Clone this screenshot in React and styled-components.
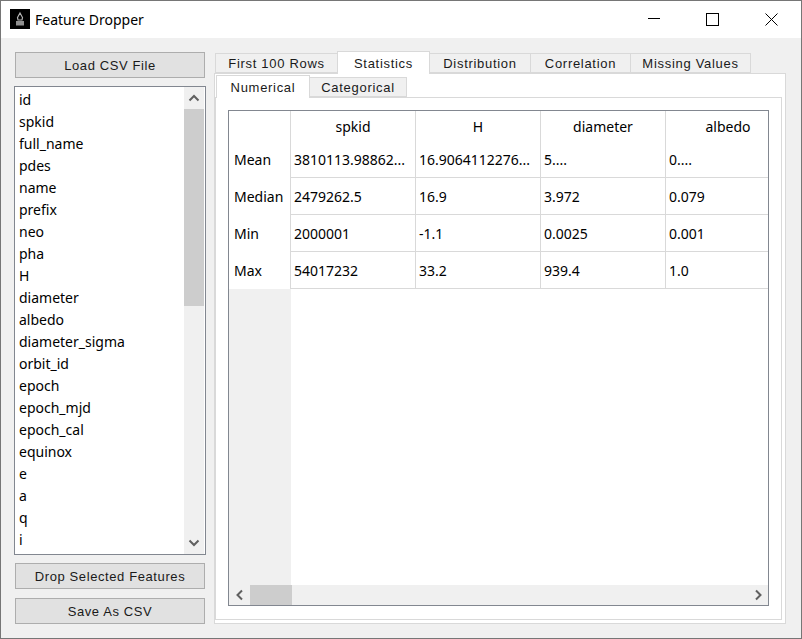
import React from 'react'
import styled, { createGlobalStyle } from 'styled-components'

const GlobalStyle = createGlobalStyle`
  html, body { margin: 0; padding: 0; background: #f0f0f0; }
  * { box-sizing: border-box; }
`

const Window = styled.div`
  width: 802px;
  height: 639px;
  border: 1px solid #767676;
  background: #f0f0f0;
  display: flex;
  flex-direction: column;
  overflow: hidden;
  font-family: "Noto Sans", "Open Sans", sans-serif;
  color: #000;
`
const TitleBar = styled.div`
  height: 37px;
  background: #fff;
  display: flex;
  align-items: center;
  padding-left: 9px;
  flex-shrink: 0;
`
const AppIcon = styled.svg`
  margin-bottom: 1px;
`
const TitleText = styled.span`
  font-size: 14px;
  margin-left: 5px;
  flex: 1;
`
const WinButton = styled.div`
  width: 59px;
  height: 37px;
  display: flex;
  align-items: center;
  justify-content: center;
`
const Body = styled.div`
  flex: 1;
  display: flex;
  padding: 13px 15px 14px 13px;
  gap: 8px;
  min-height: 0;
`
const LeftCol = styled.div`
  width: 192px;
  padding-top: 1px;
  display: flex;
  flex-direction: column;
  flex-shrink: 0;
`
const FlatButton = styled.div`
  height: 26px;
  margin: 0 1px;
  background: #e1e1e1;
  border: 1px solid #adadad;
  display: flex;
  align-items: center;
  justify-content: center;
  font-family: "Liberation Sans", Arial, sans-serif;
  font-size: 13px;
  letter-spacing: 0.6px;
  color: #1a1a1a;
  margin-top: ${p => p.$top}px;
`
const ListBox = styled.div`
  height: 469px;
  margin-top: 8px;
  background: #fff;
  border: 1px solid #828790;
  display: flex;
  overflow: hidden;
`
const Items = styled.div`
  flex: 1;
  padding: 2px 0 0 4px;
  overflow: hidden;
`
const Item = styled.div`
  height: 22px;
  line-height: 22px;
  font-size: 14px;
`
const VScroll = styled.div`
  width: 20px;
  margin-right: 1px;
  background: #f0f0f0;
  display: flex;
  flex-direction: column;
`
const ScrollEnd = styled.div`
  height: 22px;
  display: flex;
  align-items: center;
  justify-content: center;
  flex-shrink: 0;
`
const VThumb = styled.div`
  height: 197px;
  background: #cdcdcd;
`
const Spring = styled.div`
  flex: 1;
`
const RightCol = styled.div`
  flex: 1;
  display: flex;
  flex-direction: column;
  min-width: 0;
`
const TabRow = styled.div`
  display: flex;
  align-items: flex-end;
  height: 22px;
  padding-left: 1px;
  position: relative;
  z-index: 1;
  flex-shrink: 0;
`
const Tab = styled.div`
  width: ${p => p.$w}px;
  height: ${p => (p.$active ? 23 : 20)}px;
  background: ${p => (p.$active ? '#fff' : '#f0f0f0')};
  border: 1px solid #d9d9d9;
  border-bottom: ${p => (p.$active ? 'none' : '1px solid #d9d9d9')};
  margin-left: ${p => (p.$first ? 0 : -1)}px;
  margin-bottom: ${p => (p.$active ? -1 : 0)}px;
  position: relative;
  z-index: ${p => (p.$active ? 2 : 1)};
  display: flex;
  align-items: center;
  justify-content: center;
  font-family: "Liberation Sans", Arial, sans-serif;
  font-size: 13px;
  letter-spacing: 0.7px;
  color: #1a1a1a;
`
const OuterPane = styled.div`
  flex: 1;
  background: #fff;
  border: 1px solid #d9d9d9;
  padding: 1px 3px 3px 0;
  display: flex;
  flex-direction: column;
  min-height: 0;
`
const InnerPane = styled.div`
  flex: 1;
  background: #fff;
  border: 1px solid #d9d9d9;
  padding: 12px 12px 13px;
  display: flex;
  min-height: 0;
`
const TableBox = styled.div`
  flex: 1;
  border: 1px solid #828790;
  display: flex;
  flex-direction: column;
  min-width: 0;
  overflow: hidden;
`
const TableArea = styled.div`
  flex: 1;
  display: flex;
  min-height: 0;
  overflow: hidden;
`
const RowHeaders = styled.div`
  width: 62px;
  flex-shrink: 0;
  background: #f0f0f0;
  display: flex;
  flex-direction: column;
`
const Corner = styled.div`
  height: 30px;
  background: #fff;
`
const RowHeader = styled.div`
  height: 37px;
  background: #fff;
  padding-left: 5px;
  display: flex;
  align-items: center;
  font-size: 14px;
`
const Grid = styled.div`
  display: grid;
  grid-template-columns: repeat(4, 125px);
  grid-auto-rows: min-content;
  flex-shrink: 0;
  margin-left: -1px;
`
const ColHeader = styled.div`
  height: 30px;
  border-left: 1px solid #d9d9d9;
  display: flex;
  align-items: center;
  justify-content: center;
  font-size: 14px;
`
const Cell = styled.div`
  height: 37px;
  border-left: 1px solid #d9d9d9;
  border-bottom: 1px solid #d9d9d9;
  padding-left: 3px;
  display: flex;
  align-items: center;
  font-size: 14px;
  white-space: nowrap;
`
const HScroll = styled.div`
  height: 20px;
  background: #f0f0f0;
  display: flex;
  flex-shrink: 0;
`
const HEnd = styled.div`
  width: 21px;
  display: flex;
  align-items: center;
  justify-content: center;
  flex-shrink: 0;
`
const HThumb = styled.div`
  width: 42px;
  background: #cdcdcd;
`

const Chevron = ({ points }) => (
  <svg width="12" height="12" viewBox="0 0 12 12" fill="none" stroke="#606060" strokeWidth="2">
    <polyline points={points} />
  </svg>
)

const features = ['id', 'spkid', 'full_name', 'pdes', 'name', 'prefix', 'neo', 'pha', 'H', 'diameter', 'albedo', 'diameter_sigma', 'orbit_id', 'epoch', 'epoch_mjd', 'epoch_cal', 'equinox', 'e', 'a', 'q', 'i']
const tabs = [['First 100 Rows', 123], ['Statistics', 93, true], ['Distribution', 102], ['Correlation', 101], ['Missing Values', 121]]
const columns = ['spkid', 'H', 'diameter', 'albedo']
const rows = [
  ['Mean', '3810113.98862...', '16.9064112276...', '5....', '0....'],
  ['Median', '2479262.5', '16.9', '3.972', '0.079'],
  ['Min', '2000001', '-1.1', '0.0025', '0.001'],
  ['Max', '54017232', '33.2', '939.4', '1.0'],
]

export default function App() {
  return (
    <>
      <GlobalStyle />
      <Window>
        <TitleBar>
          <AppIcon width="20" height="20" viewBox="0 0 20 20">
            <rect width="20" height="20" fill="#000" />
            <path d="M10 4 L12.5 8.5 L12 11 L8 11 L7.5 8.5 Z" fill="none" stroke="#b5b5b5" strokeWidth="1.2" />
            <rect x="6" y="12" width="8" height="4.5" fill="#8f8f8f" />
          </AppIcon>
          <TitleText>Feature Dropper</TitleText>
          <WinButton>
            <svg width="13" height="13" viewBox="0 0 13 13" stroke="#000"><line x1="1" y1="5.5" x2="13" y2="5.5" /></svg>
          </WinButton>
          <WinButton>
            <svg width="13" height="13" viewBox="0 0 13 13" fill="none" stroke="#000"><rect x="0.5" y="0.5" width="12" height="12" /></svg>
          </WinButton>
          <WinButton>
            <svg width="13" height="13" viewBox="0 0 13 13" stroke="#000"><line x1="0.5" y1="0.5" x2="12.5" y2="12.5" /><line x1="12.5" y1="0.5" x2="0.5" y2="12.5" /></svg>
          </WinButton>
        </TitleBar>
        <Body>
          <LeftCol>
            <FlatButton $top={0}>Load CSV File</FlatButton>
            <ListBox>
              <Items>
                {features.map(f => <Item key={f}>{f}</Item>)}
              </Items>
              <VScroll>
                <ScrollEnd><Chevron points="1.5,8.5 6,4 10.5,8.5" /></ScrollEnd>
                <VThumb />
                <Spring />
                <ScrollEnd><Chevron points="1.5,3.5 6,8 10.5,3.5" /></ScrollEnd>
              </VScroll>
            </ListBox>
            <FlatButton $top={8}>Drop Selected Features</FlatButton>
            <FlatButton $top={9}>Save As CSV</FlatButton>
          </LeftCol>
          <RightCol>
            <TabRow>
              {tabs.map(([name, w, active], i) => (
                <Tab key={name} $w={w} $active={active} $first={i === 0}>{name}</Tab>
              ))}
            </TabRow>
            <OuterPane>
              <TabRow>
                <Tab $w={94} $active $first>Numerical</Tab>
                <Tab $w={98}>Categorical</Tab>
              </TabRow>
              <InnerPane>
                <TableBox>
                  <TableArea>
                    <RowHeaders>
                      <Corner />
                      {rows.map(r => <RowHeader key={r[0]}>{r[0]}</RowHeader>)}
                    </RowHeaders>
                    <Grid>
                      {columns.map(c => <ColHeader key={c}>{c}</ColHeader>)}
                      {rows.map(r => r.slice(1).map((v, i) => <Cell key={r[0] + i}>{v}</Cell>))}
                    </Grid>
                  </TableArea>
                  <HScroll>
                    <HEnd><Chevron points="8,1.5 3.5,6 8,10.5" /></HEnd>
                    <HThumb />
                    <Spring />
                    <HEnd><Chevron points="4,1.5 8.5,6 4,10.5" /></HEnd>
                  </HScroll>
                </TableBox>
              </InnerPane>
            </OuterPane>
          </RightCol>
        </Body>
      </Window>
    </>
  )
}
